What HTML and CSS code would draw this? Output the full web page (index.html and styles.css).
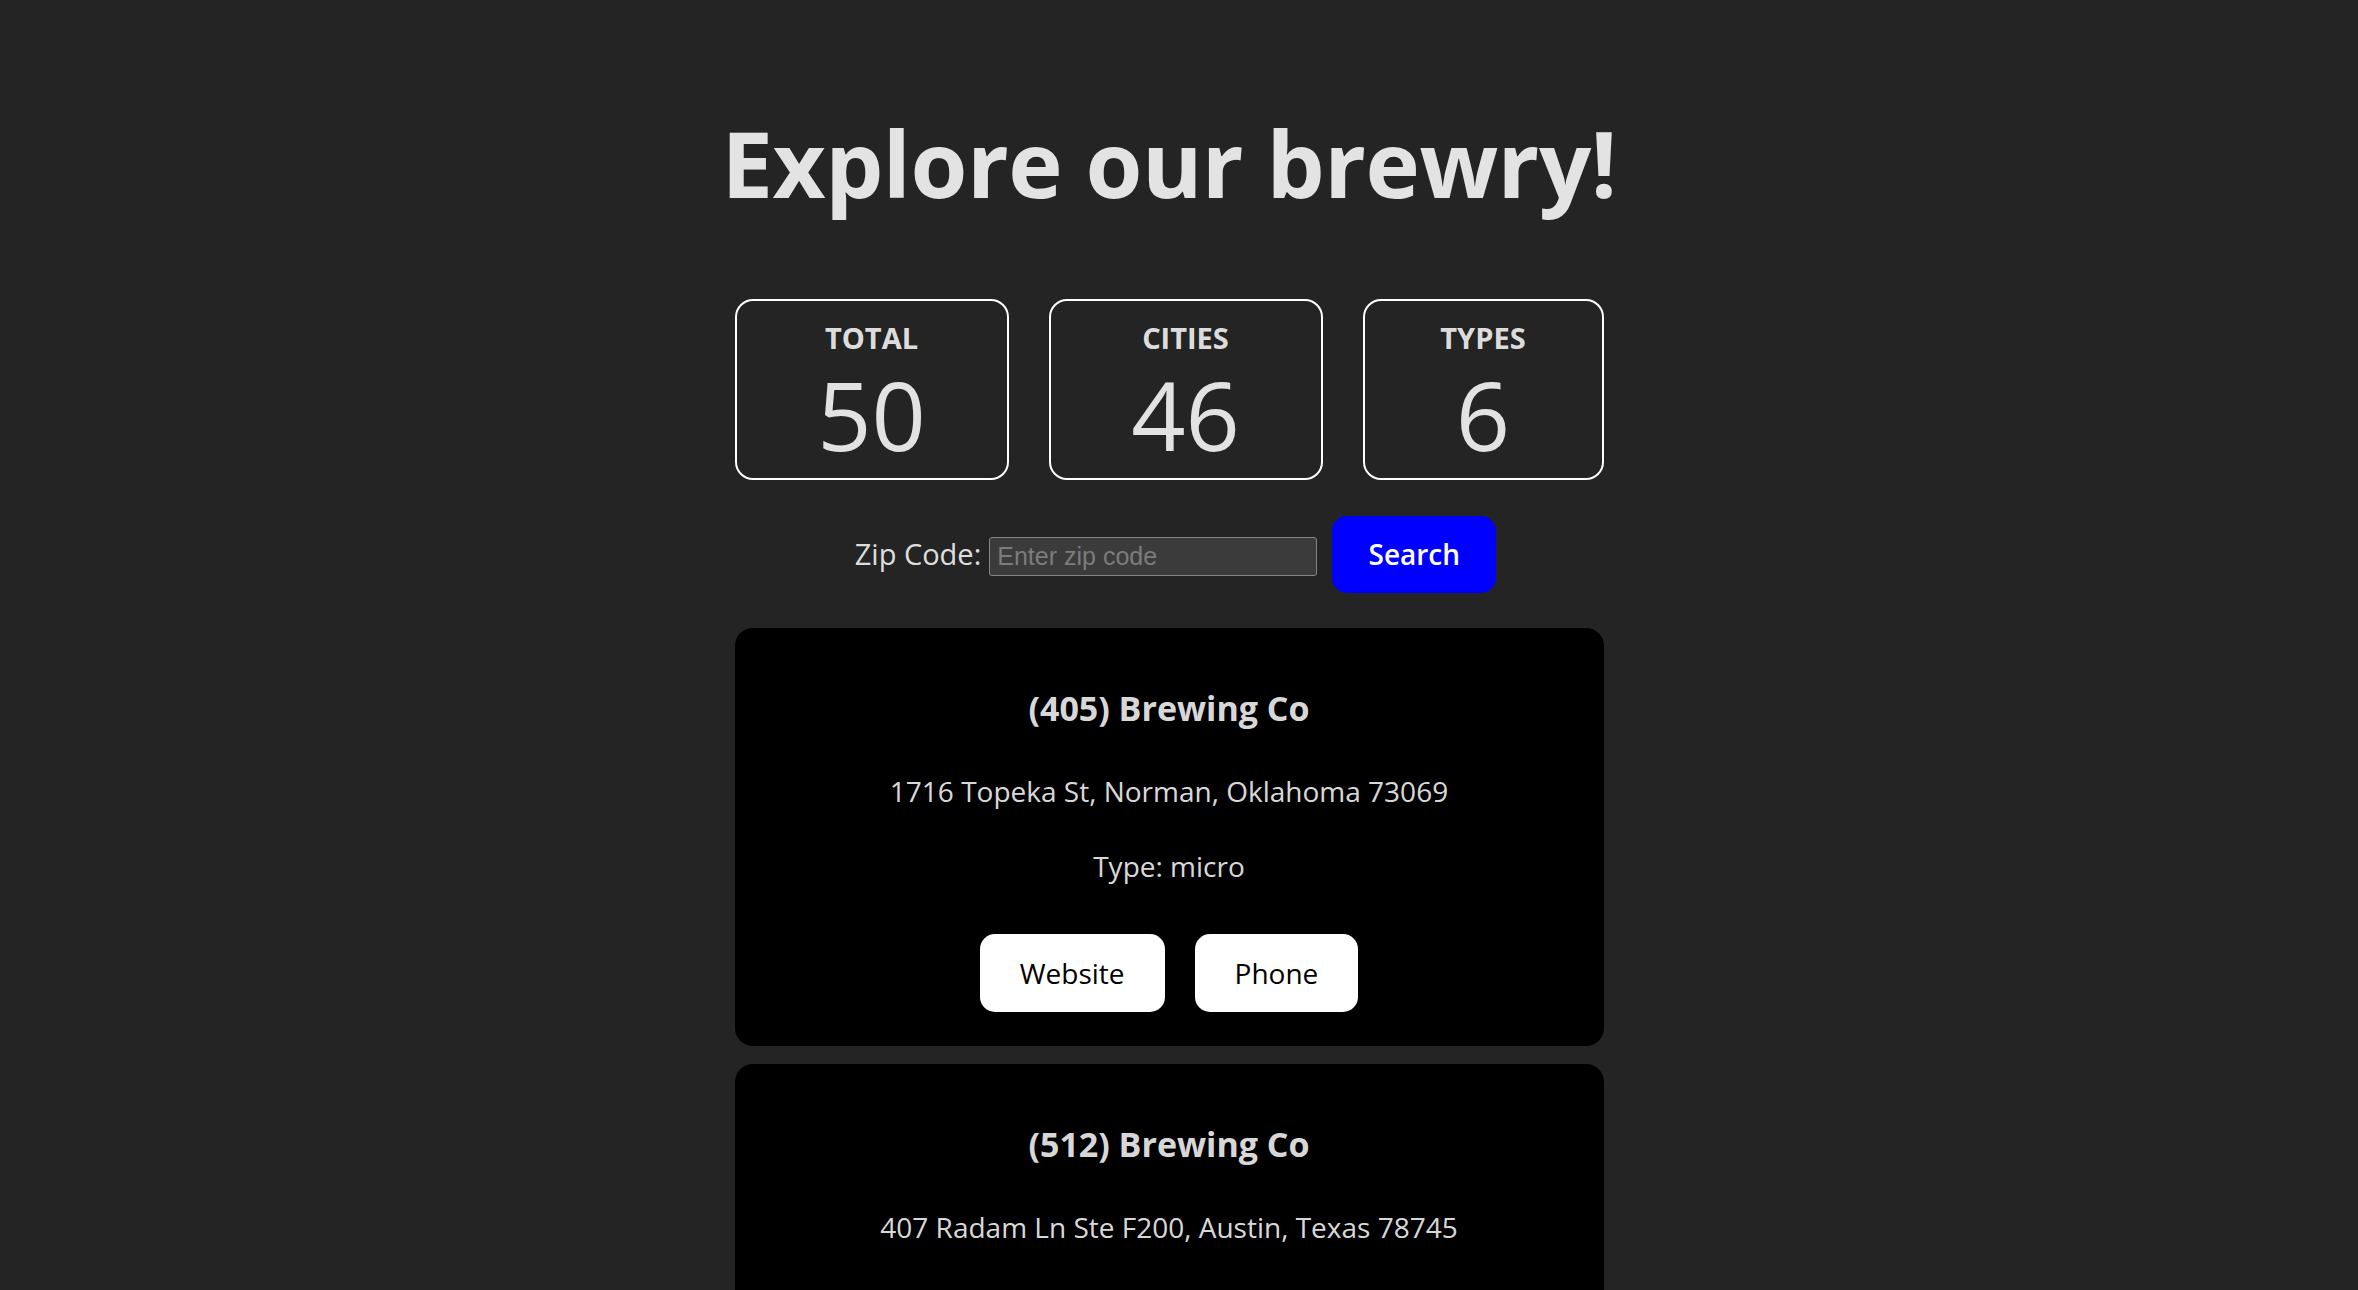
FILE: index.html
```html
<!DOCTYPE html>
<html lang="en">
<head>
<meta charset="UTF-8">
<title>Brewery Explorer</title>
<link rel="stylesheet" href="styles.css">
</head>
<body>
<div class="page">
  <h1 class="title">Explore our brewry!</h1>
  <div class="stats">
    <div class="stat">
      <div class="stat-label">TOTAL</div>
      <div class="stat-value">50</div>
    </div>
    <div class="stat">
      <div class="stat-label">CITIES</div>
      <div class="stat-value">46</div>
    </div>
    <div class="stat">
      <div class="stat-label">TYPES</div>
      <div class="stat-value">6</div>
    </div>
  </div>
  <div class="search-row">
    <label class="zip-label" for="zip">Zip Code:</label>
    <input class="zip-input" id="zip" type="text" placeholder="Enter zip code">
    <button class="search-btn">Search</button>
  </div>
  <div class="list">
    <div class="card">
      <h3 class="card-name">(405) Brewing Co</h3>
      <p class="card-text">1716 Topeka St, Norman, Oklahoma 73069</p>
      <p class="card-text">Type: micro</p>
      <div class="card-actions">
        <button class="card-btn">Website</button>
        <button class="card-btn">Phone</button>
      </div>
    </div>
    <div class="card">
      <h3 class="card-name">(512) Brewing Co</h3>
      <p class="card-text">407 Radam Ln Ste F200, Austin, Texas 78745</p>
      <p class="card-text">Type: micro</p>
      <div class="card-actions">
        <button class="card-btn">Website</button>
        <button class="card-btn">Phone</button>
      </div>
    </div>
  </div>
</div>
</body>
</html>
```
FILE: styles.css
```css
html, body {
  margin: 0;
  background: #242424;
}
body {
  font-family: "Open Sans", "Noto Sans", sans-serif;
  color: rgba(255, 255, 255, 0.87);
  padding-right: 20px;
  overflow: hidden;
  height: 1290px;
}
.page {
  width: 869px;
  margin: 0 auto;
  padding-top: 110px;
  text-align: center;
}
.title {
  margin: 0 -200px;
  white-space: nowrap;
  font-size: 92px;
  font-weight: 700;
  letter-spacing: -0.5px;
  line-height: 105.6px;
  color: #e3e3e3;
}
.stats {
  margin-top: 83px;
  display: grid;
  grid-template-columns: 274px 274px 241px;
  column-gap: 40px;
  justify-content: center;
}
.stat {
  border: 2px solid #ffffff;
  border-radius: 18px;
  height: 181px;
  box-sizing: border-box;
  padding-top: 17px;
}
.stat-label {
  font-size: 29px;
  font-weight: 700;
  line-height: 40px;
}
.stat-value {
  margin-top: 1px;
  font-size: 95px;
  font-weight: 400;
  line-height: 110px;
}
.search-row {
  margin-top: 36px;
  display: flex;
  justify-content: center;
  align-items: baseline;
  padding-left: 13px;
}
.zip-label {
  font-size: 29px;
}
.zip-input {
  margin-left: 8px;
  width: 328px;
  height: 39px;
  box-sizing: border-box;
  padding: 0 7px;
  background: #3b3b3b;
  border: 1px solid #858585;
  border-radius: 3px;
  font-family: "Liberation Sans", Arial, sans-serif;
  font-size: 25px;
  color: #ffffff;
}
.zip-input::placeholder {
  color: #7c7c7c;
}
.search-btn {
  margin-left: 15px;
  width: 164px;
  height: 77px;
  border: 1px solid transparent;
  border-radius: 15px;
  background: #0000ff;
  color: #ffffff;
  font-family: "Open Sans", sans-serif;
  font-size: 28px;
  font-weight: 600;
}
.list {
  margin-top: 35px;
  display: flex;
  flex-direction: column;
  gap: 18px;
}
.card {
  background: #000000;
  border-radius: 18px;
  padding: 58px 0 34px;
}
.card-name {
  margin: 0;
  font-size: 34px;
  font-weight: 700;
  line-height: 44px;
}
.card-text {
  margin: 39px 0 0;
  font-size: 28px;
  line-height: 45px;
}
.card-text + .card-text {
  margin-top: 30px;
}
.card-actions {
  margin-top: 45px;
  display: flex;
  justify-content: center;
  gap: 30px;
}
.card-btn {
  height: 78px;
  padding: 0 39px;
  border: 1px solid transparent;
  border-radius: 15px;
  background: #ffffff;
  color: #000000;
  font-family: "Open Sans", sans-serif;
  font-size: 28px;
  font-weight: 500;
}
```
